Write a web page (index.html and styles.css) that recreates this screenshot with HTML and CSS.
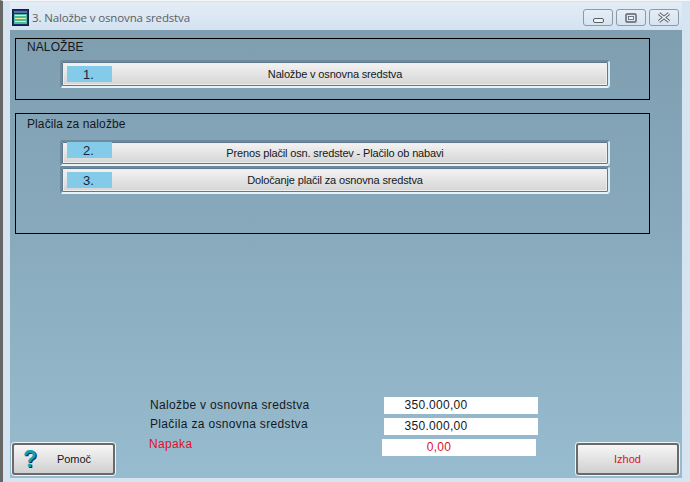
FILE: index.html
```html
<!DOCTYPE html>
<html lang="sl">
<head>
  <meta charset="UTF-8">
  <title>3. Naložbe v osnovna sredstva</title>
  <link rel="stylesheet" href="styles.css">
</head>
<body>
  <div class="window">
    <header class="titlebar">
      <svg class="app-icon" width="17" height="17" viewBox="0 0 17 17">
        <rect x="0.5" y="0.5" width="16" height="16" fill="#1a2f6b" stroke="#10204c"/>
        <rect x="2" y="5" width="13" height="10" fill="#4dbb9a"/>
        <path d="M2 3h13" stroke="#9fb4dc"/>
        <path d="M3 6.5h11M3 9.5h11M3 12.5h11" stroke="#e9ef9c"/>
      </svg>
      <span class="title">3. Naložbe v osnovna sredstva</span>
      <div class="controls">
        <div class="control">
          <svg width="13" height="13" viewBox="0 0 13 13"><rect x="1.5" y="7.5" width="10" height="4" rx="1.5" fill="#eef3f8" stroke="#5a5f66"/></svg>
        </div>
        <div class="control">
          <svg width="12" height="10" viewBox="0 0 12 10"><rect x="1" y="1" width="10" height="8" rx="1" fill="none" stroke="#5a5f66" stroke-width="1.4"/><rect x="3.5" y="3.5" width="5" height="3" fill="#eef3f8" stroke="#5a5f66" stroke-width="0.8"/></svg>
        </div>
        <div class="control">
          <svg width="14" height="11" viewBox="0 0 14 11"><path d="M2 1.5l10 8M12 1.5l-10 8" stroke="#5a5f66" stroke-width="3.4"/><path d="M2 1.5l10 8M12 1.5l-10 8" stroke="#eef3f8" stroke-width="1.6"/></svg>
        </div>
      </div>
    </header>

    <main class="content">
      <section class="panel panel-first">
        <div class="panel-title">NALOŽBE</div>
        <div class="menu-btn">
          <span class="menu-num">1.</span>
          <span class="menu-label">Naložbe v osnovna sredstva</span>
        </div>
      </section>

      <section class="panel panel-second">
        <div class="panel-title">Plačila za naložbe</div>
        <div class="menu-btn menu-btn-short">
          <span class="menu-num">2.</span>
          <span class="menu-label">Prenos plačil osn. sredstev - Plačilo ob nabavi</span>
        </div>
        <div class="menu-btn">
          <span class="menu-num">3.</span>
          <span class="menu-label">Določanje plačil za osnovna sredstva</span>
        </div>
      </section>

      <footer class="footer">
        <div class="action-btn help-btn">
          <span class="help-icon">?</span>
          <span class="help-text">Pomoč</span>
        </div>
        <div class="totals">
          <span class="total-label first">Naložbe v osnovna sredstva</span>
          <span class="total-value">350.000,00</span>
          <span class="total-label second">Plačila za osnovna sredstva</span>
          <span class="total-value">350.000,00</span>
          <span class="total-label error">Napaka</span>
          <span class="total-value error">0,00</span>
        </div>
        <div class="action-btn exit-btn">Izhod</div>
      </footer>
    </main>
  </div>
</body>
</html>
```

FILE: styles.css
```css
:root {
  --frame-color: #d6e4f2;
  --ink: #14181c;
  --error: #e0102c;
}

* {
  box-sizing: border-box;
}

html, body {
  margin: 0;
  padding: 0;
  height: 100%;
}

body {
  width: 690px;
  height: 482px;
  overflow: hidden;
  font-family: "Liberation Sans", Arial, sans-serif;
  font-size: 12px;
  color: var(--ink);
  background: #fff;
}

.window {
  display: flex;
  flex-direction: column;
  height: 100%;
  padding: 1px 8px 4px 7px;
  background: var(--frame-color);
  border-left: 3px solid #666;
  border-top: 1px solid #f4f6f8;
}

.titlebar {
  display: flex;
  align-items: center;
  height: 28px;
  flex: none;
  padding: 2px 3px 0 2px;
  background: linear-gradient(#e4edf6, #d3e2f1);
}

.app-icon {
  flex: none;
}

.title {
  margin-left: 3px;
  font-family: "Open Sans", sans-serif;
  font-size: 11.5px;
  letter-spacing: -0.14px;
  color: #5a5f66;
}

.controls {
  display: flex;
  gap: 3px;
  margin-left: auto;
  margin-top: 1px;
}

.control {
  display: flex;
  align-items: center;
  justify-content: center;
  width: 30px;
  height: 17px;
  border: 1px solid #8c99a6;
  border-radius: 3px;
  background: linear-gradient(#e6eef6, #d6e3f0);
}

.content {
  display: flex;
  flex-direction: column;
  flex: 1;
  padding: 8px 0 0 5px;
  background: linear-gradient(#7f9fb1 0%, #86a8ba 40%, #98bccf 100%);
}

.panel {
  width: 635px;
  border: 1px solid #000;
  padding: 0 39px 0 44px;
}

.panel-first {
  height: 62px;
}

.panel-second {
  height: 121px;
  margin-top: 13px;
}

.panel-title {
  height: 21px;
  margin-left: -33px;
  line-height: 16px;
  letter-spacing: 0.1px;
}

.panel-second .panel-title {
  height: 26px;
  padding-top: 2px;
}

.menu-btn {
  display: flex;
  align-items: center;
  height: 28px;
  padding: 2px 3px 3px 3px;
  border-left: 2px solid #6e8a9b;
  border-top: 2px solid #6e8a9b;
  border-right: 2px solid #d3ecf6;
  border-bottom: 2px solid #e6f4fa;
  background: linear-gradient(#f4f4f4, #d4d4d4);
  box-shadow: inset 0 0 0 1px #5f7a8c, inset 0 0 0 2px #eee;
  border-radius: 3px;
}

.menu-btn-short {
  height: 26px;
  align-items: flex-start;
  padding-top: 0;
}

.menu-num {
  flex: none;
  width: 45px;
  height: 16px;
  margin-left: 2px;
  padding-right: 2px;
  background: #84cbea;
  text-align: center;
  font-size: 13px;
  line-height: 18px;
  color: #18243a;
}

.menu-label {
  flex: 1;
  padding-right: 47px;
  text-align: center;
  font-size: 11px;
  letter-spacing: -0.15px;
}

.menu-btn-short .menu-label {
  padding-top: 5px;
}

.footer {
  display: flex;
  align-items: flex-end;
  margin-top: auto;
  margin-left: -3px;
}

.action-btn {
  display: flex;
  align-items: center;
  justify-content: center;
  width: 103px;
  height: 32px;
  margin-bottom: 3px;
  border: 2px solid #6a6a6a;
  border-radius: 3px;
  background: linear-gradient(#f6f6f6, #d0d0d0);
  box-shadow: 0 0 0 1px #eef4f8;
  font-size: 11px;
}

.help-btn {
  justify-content: flex-start;
  gap: 20px;
  padding-left: 9px;
}

.help-icon {
  font-size: 23px;
  font-weight: bold;
  line-height: 23px;
  color: #10a0ae;
  text-shadow: 1px 1px 0 #0c2a66;
}

.help-text {
  letter-spacing: -0.1px;
}

.exit-btn {
  margin-left: auto;
  margin-right: 3px;
  color: var(--error);
}

.totals {
  display: grid;
  grid-template-columns: 234px 154px;
  grid-auto-rows: 17px;
  row-gap: 4px;
  margin: 0 0 22px 35px;
  align-items: center;
}

.total-label {
  letter-spacing: 0.34px;
}

.total-label.first {
  margin-bottom: 2px;
}

.total-label.second {
  margin-bottom: 6px;
}

.total-value {
  height: 17px;
  padding-right: 50px;
  background: #fff;
  text-align: center;
  line-height: 17px;
  letter-spacing: 0.3px;
}

.total-label.error {
  margin-left: -1px;
  margin-bottom: 7px;
  color: var(--error);
}

.total-value.error {
  margin-left: -2px;
  margin-right: 2px;
  padding-right: 40px;
  color: var(--error);
}
```
